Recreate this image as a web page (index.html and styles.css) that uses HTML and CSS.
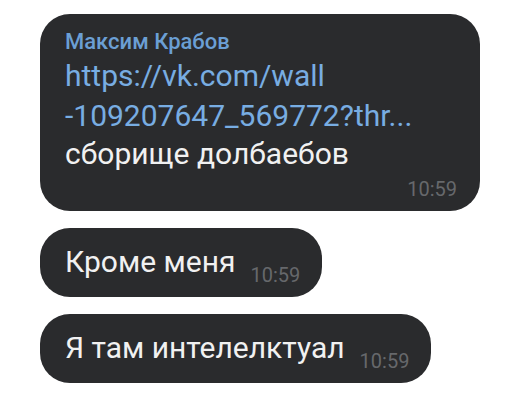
FILE: index.html
```html
<!DOCTYPE html>
<html>
<head>
<meta charset="UTF-8">
<title>Chat</title>
<link rel="stylesheet" href="styles.css">
</head>
<body>
    <div class="chat">
        <div class="bubble bubble-forward">
            <div class="author">Максим Крабов</div>
            <div class="link">https://vk.com/wall<br>-109207647_569772?thr...</div>
            <div class="text">сборище долбаебов</div>
            <div class="time">10:59</div>
        </div>
        <div class="bubble bubble-short">
            <span class="text">Кроме меня</span>
            <span class="time">10:59</span>
        </div>
        <div class="bubble bubble-short">
            <span class="text">Я там интелелктуал</span>
            <span class="time">10:59</span>
        </div>
    </div>
</body>
</html>
```

FILE: styles.css
```css
body {
    margin: 0;
    padding: 0;
    background: #fff;
    font-family: Roboto, "Noto Sans", sans-serif;
}
.chat {
    display: flex;
    flex-direction: column;
    align-items: flex-start;
    gap: 17px;
    padding: 14px 0 0 40px;
}
.bubble {
    background: #2a2b2d;
    color: #f1f1f1;
    border-radius: 30px;
    box-sizing: border-box;
}
.bubble-forward {
    width: 440px;
    padding: 15px 23px 12px 25px;
}
.author {
    font-size: 22px;
    line-height: 26px;
    font-weight: 500;
    color: #6b9fd4;
}
.link {
    margin-top: 1px;
    font-size: 30px;
    line-height: 40px;
    color: #78ade2;
}
.text {
    font-size: 30px;
    line-height: 40px;
    color: #f1f1f1;
}
.time {
    font-size: 20px;
    line-height: 20px;
    color: #66686b;
}
.bubble-forward .text {
    margin-top: -2px;
}
.bubble-forward .time {
    margin-top: 5px;
    text-align: right;
}
.bubble-short {
    display: flex;
    align-items: flex-end;
    gap: 15px;
    padding: 14px 22px 15px 25px;
}
.bubble-short .time {
    margin-bottom: -3px;
}
```
